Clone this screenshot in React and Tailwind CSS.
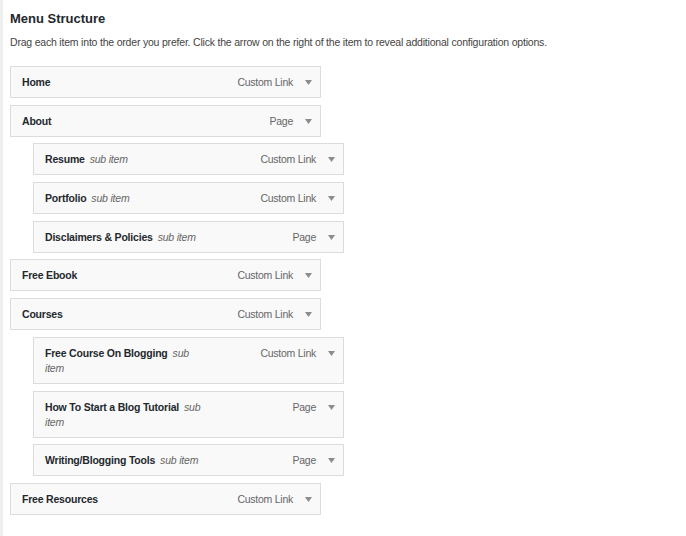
import React from "react";

const items = [
  { title: "Home", type: "Custom Link", depth: 0 },
  { title: "About", type: "Page", depth: 0 },
  { title: "Resume", type: "Custom Link", depth: 1 },
  { title: "Portfolio", type: "Custom Link", depth: 1 },
  { title: "Disclaimers & Policies", type: "Page", depth: 1 },
  { title: "Free Ebook", type: "Custom Link", depth: 0 },
  { title: "Courses", type: "Custom Link", depth: 0 },
  { title: "Free Course On Blogging", type: "Custom Link", depth: 1 },
  { title: "How To Start a Blog Tutorial", type: "Page", depth: 1 },
  { title: "Writing/Blogging Tools", type: "Page", depth: 1 },
  { title: "Free Resources", type: "Custom Link", depth: 0 },
];

function Arrow() {
  return (
    <svg width="7" height="5" viewBox="0 0 7 5" className="mt-[5px]">
      <polygon points="0,0 7,0 3.5,5" fill="#8c8c8c" />
    </svg>
  );
}

function Item({ title, type, depth }) {
  return (
    <div
      className={
        "w-[311px] border border-[#dcdcdc] bg-[#f9f9f9] pl-[11px] pr-[8px] pt-[8px] pb-[7px] flex justify-between items-start " +
        (depth ? "ml-[23px]" : "")
      }
    >
      <div className="max-w-[160px] text-[10.5px] tracking-[-0.2px] leading-[15px] text-[#23282d]">
        <span className="font-bold">{title}</span>
        {depth ? <span className="italic text-[#666] ml-[5px]">sub item</span> : null}
      </div>
      <div className="flex items-start gap-[12px] text-[10.5px] tracking-[-0.25px] leading-[15px] text-[#666]">
        <span>{type}</span>
        <Arrow />
      </div>
    </div>
  );
}

export default function App() {
  return (
    <div
      className="flex min-h-[536px] bg-white"
      style={{ fontFamily: '"Liberation Sans", Arial, sans-serif' }}
    >
      <div className="w-[3px] bg-[#eeeeee] shrink-0" />
      <div className="pl-[7px] pt-[10px]">
        <h3 className="text-[13px] leading-[17px] font-bold text-[#23282d]">Menu Structure</h3>
        <p className="mt-[8px] text-[10.5px] tracking-[-0.2px] leading-[14px] text-[#444]">
          Drag each item into the order you prefer. Click the arrow on the right of the item to reveal additional configuration options.
        </p>
        <div className="mt-[17px] flex flex-col gap-[6.7px]">
          {items.map((it, i) => (
            <Item key={i} {...it} />
          ))}
        </div>
      </div>
    </div>
  );
}
